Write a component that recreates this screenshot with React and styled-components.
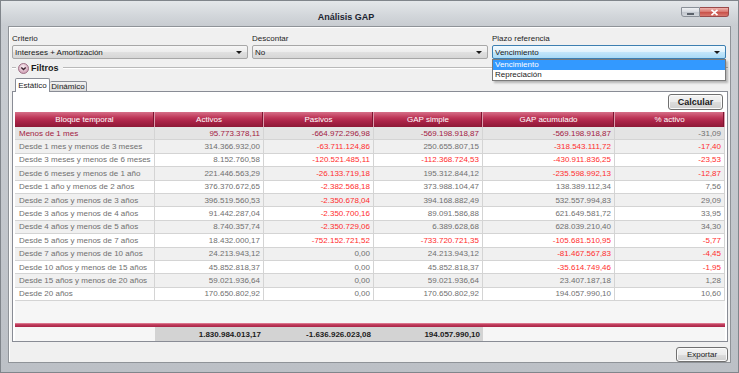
import React from "react";
import styled, { createGlobalStyle } from "styled-components";

const GlobalStyle = createGlobalStyle`
  html, body { margin: 0; padding: 0; background: #ffffff; }
  body {
    font-family: "Liberation Sans", Arial, sans-serif;
    font-size: 8px;
    color: #1e1e1e;
  }
  * { box-sizing: border-box; }
`;

const COLS = "140px 109px 110px 109px 132px 110px";

const Window = styled.div`
  width: 739px;
  height: 373px;
  display: flex;
  flex-direction: column;
  background: linear-gradient(to bottom, #dfe2e6 0px, #c9cdd2 26px, #bcc0c6 100%);
  border: 1px solid #80858b;
  padding: 0 7px 9px 7px;
`;

const TitleBar = styled.div`
  height: 25px;
  margin: 0 -7px;
  padding: 0 9px 0 10px;
  display: flex;
  align-items: flex-start;
  background: linear-gradient(to bottom, #e4e7ea, #d2d6da 60%, #c8ccd1);
`;

const Title = styled.div`
  flex: 1;
  text-align: center;
  padding-top: 10px;
  line-height: 13px;
  font-size: 9px;
  font-weight: bold;
  color: #1c2430;
`;

const WinButtons = styled.div`
  display: flex;
  margin-top: 6px;
`;

const WinButton = styled.div`
  width: ${(p) => (p.$close ? "29px" : "19px")};
  height: 10px;
  display: flex;
  align-items: center;
  justify-content: center;
  border: 1px solid ${(p) => (p.$close ? "#9a4a4a" : "#8a9098")};
  border-left-width: ${(p) => (p.$close ? "0" : "1px")};
  border-radius: ${(p) => (p.$close ? "0 0 3px 0" : "0 0 0 3px")};
  background: ${(p) =>
    p.$close
      ? "linear-gradient(to bottom, #eeb4ae, #d97a72 45%, #c9524a 55%, #d87a70)"
      : "linear-gradient(to bottom, #eef0f3, #d8dce1 45%, #c3c8cf 55%, #d2d6db)"};
`;

const MinDash = styled.div`
  width: 7px;
  height: 2px;
  margin-top: 3px;
  background: #5b626b;
`;

const Body = styled.div`
  flex: 1;
  display: flex;
  flex-direction: column;
  background: #f0f0f0;
  border: 1px solid #8f9398;
  box-shadow: inset 1px 1px 0 #ffffff;
  padding: 5px 2px 0 3px;
`;

const Fields = styled.div`
  display: grid;
  grid-template-columns: 236px 236px 234px;
  column-gap: 4px;
`;

const Field = styled.div`
  position: relative;
  display: flex;
  flex-direction: column;
  gap: 1px;
`;

const Label = styled.div`
  height: 12px;
  line-height: 13px;
  color: #1e1e1e;
`;

const Combo = styled.div`
  height: 14px;
  display: flex;
  align-items: center;
  justify-content: space-between;
  padding: 0 5px 0 2px;
  border: 1px solid ${(p) => (p.$open ? "#3c7fb1" : "#a7a7a7")};
  border-radius: 2px;
  background: ${(p) =>
    p.$open
      ? "linear-gradient(to bottom, #f3fafe, #dff2fc 50%, #c4e7fb 50%, #a9daf6)"
      : "linear-gradient(to bottom, #f6f6f6, #ececec 50%, #e1e1e1 50%, #d6d6d6)"};
  color: #1a1a1a;
`;

const Arrow = styled.div`
  width: 0;
  height: 0;
  border-left: 3px solid transparent;
  border-right: 3px solid transparent;
  border-top: 3px solid #1a1a1a;
`;

const DropList = styled.div`
  position: absolute;
  top: 100%;
  left: 0;
  right: 0;
  z-index: 5;
  background: #ffffff;
  border: 1px solid #7a7a7a;
  box-shadow: 2px 2px 2px rgba(0, 0, 0, 0.25);
`;

const DropItem = styled.div`
  height: 10px;
  line-height: 10px;
  padding-left: 2px;
  background: ${(p) => (p.$active ? "#3399ff" : "#ffffff")};
  color: ${(p) => (p.$active ? "#ffffff" : "#1a1a1a")};
`;

const FilterRow = styled.div`
  height: 12px;
  margin-top: 3px;
  display: flex;
  align-items: center;
  gap: 2px;
`;

const Rule = styled.div`
  height: 2px;
  border-top: 1px solid #b9b9b9;
  border-bottom: 1px solid #ffffff;
  width: ${(p) => (p.$short ? "4px" : "auto")};
  flex: ${(p) => (p.$short ? "none" : "1")};
  margin-left: ${(p) => (p.$short ? "0" : "2px")};
`;

const FilterLabel = styled.div`
  font-weight: bold;
  font-size: 9px;
  color: #1a1a1a;
`;

const Tabs = styled.div`
  display: flex;
  align-items: flex-end;
  height: 14px;
  margin-top: 4px;
  padding-left: 3px;
  position: relative;
  z-index: 1;
`;

const Tab = styled.div`
  height: ${(p) => (p.$active ? "14px" : "11px")};
  width: ${(p) => (p.$active ? "35px" : "37px")};
  display: flex;
  align-items: center;
  justify-content: center;
  border: 1px solid #898c95;
  border-bottom: ${(p) => (p.$active ? "none" : "1px solid #898c95")};
  border-left-width: ${(p) => (p.$active ? "1px" : "0")};
  border-radius: 2px 2px 0 0;
  background: ${(p) =>
    p.$active ? "#ffffff" : "linear-gradient(to bottom, #f3f3f3, #e6e6e6 50%, #dadada)"};
  color: #1a1a1a;
  white-space: nowrap;
`;

const Panel = styled.div`
  flex: 1;
  margin-top: -1px;
  display: flex;
  flex-direction: column;
  gap: 2px;
  border: 1px solid #898c95;
  background: #ffffff;
  padding: 2px 2px 0 2px;
`;

const PanelTop = styled.div`
  display: flex;
  justify-content: flex-end;
  padding-right: 2px;
`;

const Button = styled.div`
  width: ${(p) => p.$w}px;
  height: ${(p) => p.$h}px;
  display: flex;
  align-items: center;
  justify-content: center;
  border: 1px solid #707070;
  border-radius: 3px;
  box-shadow: inset 0 0 0 1px #fbfbfb;
  background: linear-gradient(to bottom, #f3f3f3, #ebebeb 50%, #dddddd 50%, #cfcfcf);
  font-weight: ${(p) => (p.$bold ? "bold" : "normal")};
  font-size: ${(p) => (p.$bold ? "9px" : "8px")};
  color: #1a1a1a;
`;

const Grid = styled.div`
  flex: 1;
  display: flex;
  flex-direction: column;
  background: #f6f6f6;
`;

const HeaderRow = styled.div`
  display: grid;
  grid-template-columns: ${COLS};
  height: 15px;
  background: linear-gradient(to bottom, #d66f88 0%, #bf3a5b 35%, #ac2448 60%, #8d1836 100%);
`;

const HeadCell = styled.div`
  display: flex;
  align-items: center;
  justify-content: center;
  color: #ffffff;
  border-right: 1px solid #dc9aab;
  box-shadow: inset -1px 0 0 #7e1430;
`;

const Row = styled.div`
  display: grid;
  grid-template-columns: ${COLS};
  height: 13.4px;
  background: ${(p) => (p.$selected ? "#e4e4e4" : p.$alt ? "#f0f0f0" : "#ffffff")};
`;

const Cell = styled.div`
  display: flex;
  align-items: center;
  justify-content: ${(p) => (p.$num ? "flex-end" : "flex-start")};
  padding: ${(p) => (p.$num ? "0 3px 0 0" : "0 0 0 4px")};
  border-right: 1px solid #d4d4d4;
  border-bottom: 1px solid #d4d4d4;
  white-space: nowrap;
  overflow: hidden;
  color: ${(p) =>
    p.$tone === "sel" ? "#a3203f" : p.$tone === "neg" ? "#ff2d2d" : "#6f6f6f"};
`;

const Filler = styled.div`
  flex: 1;
`;

const TotalBar = styled.div`
  height: 4px;
  background: linear-gradient(to bottom, #e68ea2, #c03c5c 40%, #a92447);
`;

const TotalRow = styled.div`
  display: grid;
  grid-template-columns: ${COLS};
  height: 14px;
`;

const TotalCell = styled.div`
  display: flex;
  align-items: center;
  justify-content: flex-end;
  padding-right: 3px;
  background: ${(p) => (p.$shade ? "#d3d3d3" : "transparent")};
  font-weight: bold;
  color: #1b1b1b;
`;

const Footer = styled.div`
  display: flex;
  justify-content: flex-end;
  margin-top: 5px;
  height: 15px;
`;

const FilterIcon = () => (
  <svg width="11" height="11" viewBox="0 0 11 11">
    <defs>
      <radialGradient id="fg" cx="0.45" cy="0.35" r="0.7">
        <stop offset="0" stopColor="#fbeef3" />
        <stop offset="1" stopColor="#c996ad" />
      </radialGradient>
    </defs>
    <circle cx="5.5" cy="5.5" r="5" fill="url(#fg)" stroke="#98667e" strokeWidth="0.9" />
    <path d="M3.3 4.4 L5.5 6.6 L7.7 4.4" fill="none" stroke="#3d2431" strokeWidth="1.4" />
  </svg>
);

const CloseX = () => (
  <svg width="9" height="7" viewBox="0 0 9 7">
    <path d="M1.5 0.8 L7.5 6.2 M7.5 0.8 L1.5 6.2" stroke="#ffffff" strokeWidth="1.6" />
  </svg>
);

const headers = [
  "Bloque temporal",
  "Activos",
  "Pasivos",
  "GAP simple",
  "GAP acumulado",
  "% activo",
];

const rows = [
  ["Menos de 1 mes", "95.773.378,11", "-664.972.296,98", "-569.198.918,87", "-569.198.918,87", "-31,09"],
  ["Desde 1 mes y menos de 3 meses", "314.366.932,00", "-63.711.124,86", "250.655.807,15", "-318.543.111,72", "-17,40"],
  ["Desde 3 meses y menos de 6 meses", "8.152.760,58", "-120.521.485,11", "-112.368.724,53", "-430.911.836,25", "-23,53"],
  ["Desde 6 meses y menos de 1 año", "221.446.563,29", "-26.133.719,18", "195.312.844,12", "-235.598.992,13", "-12,87"],
  ["Desde 1 año y menos de 2 años", "376.370.672,65", "-2.382.568,18", "373.988.104,47", "138.389.112,34", "7,56"],
  ["Desde 2 años y menos de 3 años", "396.519.560,53", "-2.350.678,04", "394.168.882,49", "532.557.994,83", "29,09"],
  ["Desde 3 años y menos de 4 años", "91.442.287,04", "-2.350.700,16", "89.091.586,88", "621.649.581,72", "33,95"],
  ["Desde 4 años y menos de 5 años", "8.740.357,74", "-2.350.729,06", "6.389.628,68", "628.039.210,40", "34,30"],
  ["Desde 5 años y menos de 7 años", "18.432.000,17", "-752.152.721,52", "-733.720.721,35", "-105.681.510,95", "-5,77"],
  ["Desde 7 años y menos de 10 años", "24.213.943,12", "0,00", "24.213.943,12", "-81.467.567,83", "-4,45"],
  ["Desde 10 años y menos de 15 años", "45.852.818,37", "0,00", "45.852.818,37", "-35.614.749,46", "-1,95"],
  ["Desde 15 años y menos de 20 años", "59.021.936,64", "0,00", "59.021.936,64", "23.407.187,18", "1,28"],
  ["Desde 20 años", "170.650.802,92", "0,00", "170.650.802,92", "194.057.990,10", "10,60"],
];

const totals = ["", "1.830.984.013,17", "-1.636.926.023,08", "194.057.990,10", "", ""];

function toneFor(rowIndex, colIndex, value) {
  if (rowIndex === 0) return colIndex === 5 ? "plain" : "sel";
  return value.startsWith("-") ? "neg" : "plain";
}

export default function App() {
  return (
    <>
      <GlobalStyle />
      <Window>
        <TitleBar>
          <Title>Análisis GAP</Title>
          <WinButtons>
            <WinButton>
              <MinDash />
            </WinButton>
            <WinButton $close>
              <CloseX />
            </WinButton>
          </WinButtons>
        </TitleBar>

        <Body>
          <Fields>
            <Field>
              <Label>Criterio</Label>
              <Combo>
                <span>Intereses + Amortización</span>
                <Arrow />
              </Combo>
            </Field>
            <Field>
              <Label>Descontar</Label>
              <Combo>
                <span>No</span>
                <Arrow />
              </Combo>
            </Field>
            <Field>
              <Label>Plazo referencia</Label>
              <Combo $open>
                <span>Vencimiento</span>
                <Arrow />
              </Combo>
              <DropList>
                <DropItem $active>Vencimiento</DropItem>
                <DropItem>Repreciación</DropItem>
              </DropList>
            </Field>
          </Fields>

          <FilterRow>
            <Rule $short />
            <FilterIcon />
            <FilterLabel>Filtros</FilterLabel>
            <Rule />
          </FilterRow>

          <Tabs>
            <Tab $active>Estático</Tab>
            <Tab>Dinámico</Tab>
          </Tabs>

          <Panel>
            <PanelTop>
              <Button $w={55} $h={16} $bold>
                Calcular
              </Button>
            </PanelTop>
            <Grid>
              <HeaderRow>
                {headers.map((h) => (
                  <HeadCell key={h}>{h}</HeadCell>
                ))}
              </HeaderRow>
              {rows.map((r, i) => (
                <Row key={r[0]} $selected={i === 0} $alt={i % 2 === 1}>
                  {r.map((v, j) => (
                    <Cell key={j} $num={j > 0} $tone={toneFor(i, j, v)}>
                      {v}
                    </Cell>
                  ))}
                </Row>
              ))}
              <Filler />
              <TotalBar />
              <TotalRow>
                {totals.map((t, j) => (
                  <TotalCell key={j} $shade={j >= 1 && j <= 3}>
                    {t}
                  </TotalCell>
                ))}
              </TotalRow>
            </Grid>
          </Panel>

          <Footer>
            <Button $w={52} $h={15}>
              Exportar
            </Button>
          </Footer>
        </Body>
      </Window>
    </>
  );
}
